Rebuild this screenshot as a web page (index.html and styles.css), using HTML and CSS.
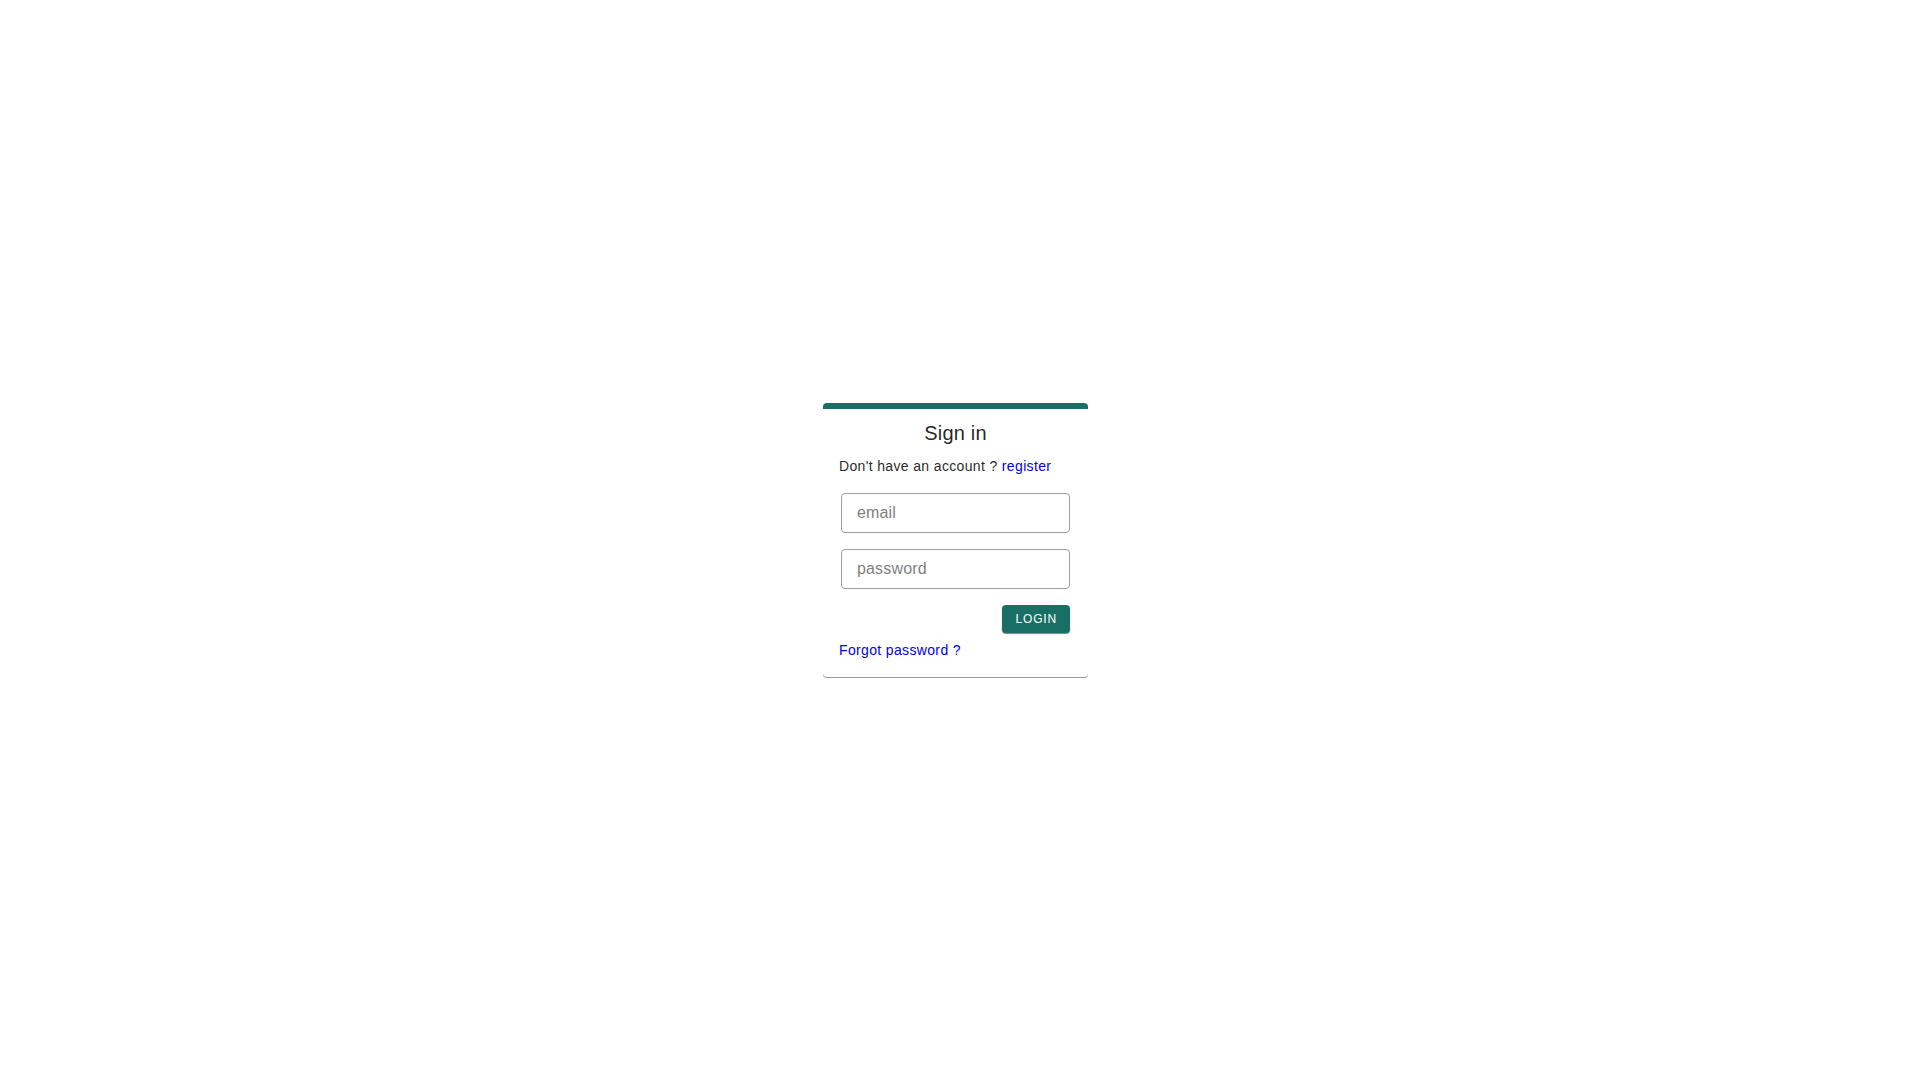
FILE: index.html
```
<!DOCTYPE html>
<html lang="en">
<head>
    <meta charset="UTF-8">
    <meta name="viewport" content="width=device-width, initial-scale=1">
    <title>Sign in</title>

    <link rel="stylesheet" href="styles.css">
</head>
<body>

	<main class="page">
		<div class="card">
			<h1 class="title">Sign in</h1>
			<p class="text">Don't have an account ? <a href="#register">register</a></p>

			<form class="login_form">
				<input type="email" class="field" name="email" placeholder="email" aria-label="email">
				<input type="password" class="field" name="password" placeholder="password" aria-label="password">
				<button type="submit" class="btn">Login</button>
			</form>

			<p class="text"><a href="#forgot">Forgot password ?</a></p>
		</div>
	</main>

</body>
</html>
```
FILE: styles.css
```
* {
	margin: 0;
	padding: 0;
	box-sizing: border-box;
}

body {
	font-family: "Liberation Sans", Arial, sans-serif;
	font-size: 14px;
	color: rgba(0, 0, 0, 0.87);
	background-color: #fff;
}

a {
	color: #0000ee;
	text-decoration: none;
}

.page {
	display: flex;
	align-items: center;
	justify-content: center;
	min-height: 100vh;
	padding-right: 9px;
}

.card {
	width: 265px;
	padding: 8px 16px 17px;
	border-top: 6px solid #196f65;
	border-radius: 4px;
	background-color: #fff;
	box-shadow: 0 1px 0 rgba(0, 0, 0, 0.4);
}

.title {
	margin-bottom: 7px;
	font-size: 20px;
	font-weight: normal;
	line-height: 32px;
	letter-spacing: 0.01em;
	text-align: center;
}

.text {
	line-height: 20px;
	letter-spacing: 0.025em;
}

.login_form {
	display: flex;
	flex-direction: column;
	gap: 16px;
	padding: 17px 2px 7px;
}

.field {
	width: 100%;
	height: 40px;
	padding: 0 15px;
	font-family: inherit;
	font-size: 16px;
	letter-spacing: 0.01em;
	color: inherit;
	border: 1px solid #9e9e9e;
	border-radius: 4px;
	background-color: #fff;
}

.field::placeholder {
	color: #7f7f7f;
}

.btn {
	align-self: flex-end;
	height: 28px;
	padding: 0 13px;
	font-family: inherit;
	font-size: 12px;
	letter-spacing: 0.07em;
	text-transform: uppercase;
	color: #fff;
	border: none;
	border-radius: 4px;
	background-color: #196f65;
	box-shadow: 0 1px 1px rgba(0, 0, 0, 0.5);
	cursor: pointer;
}
```
